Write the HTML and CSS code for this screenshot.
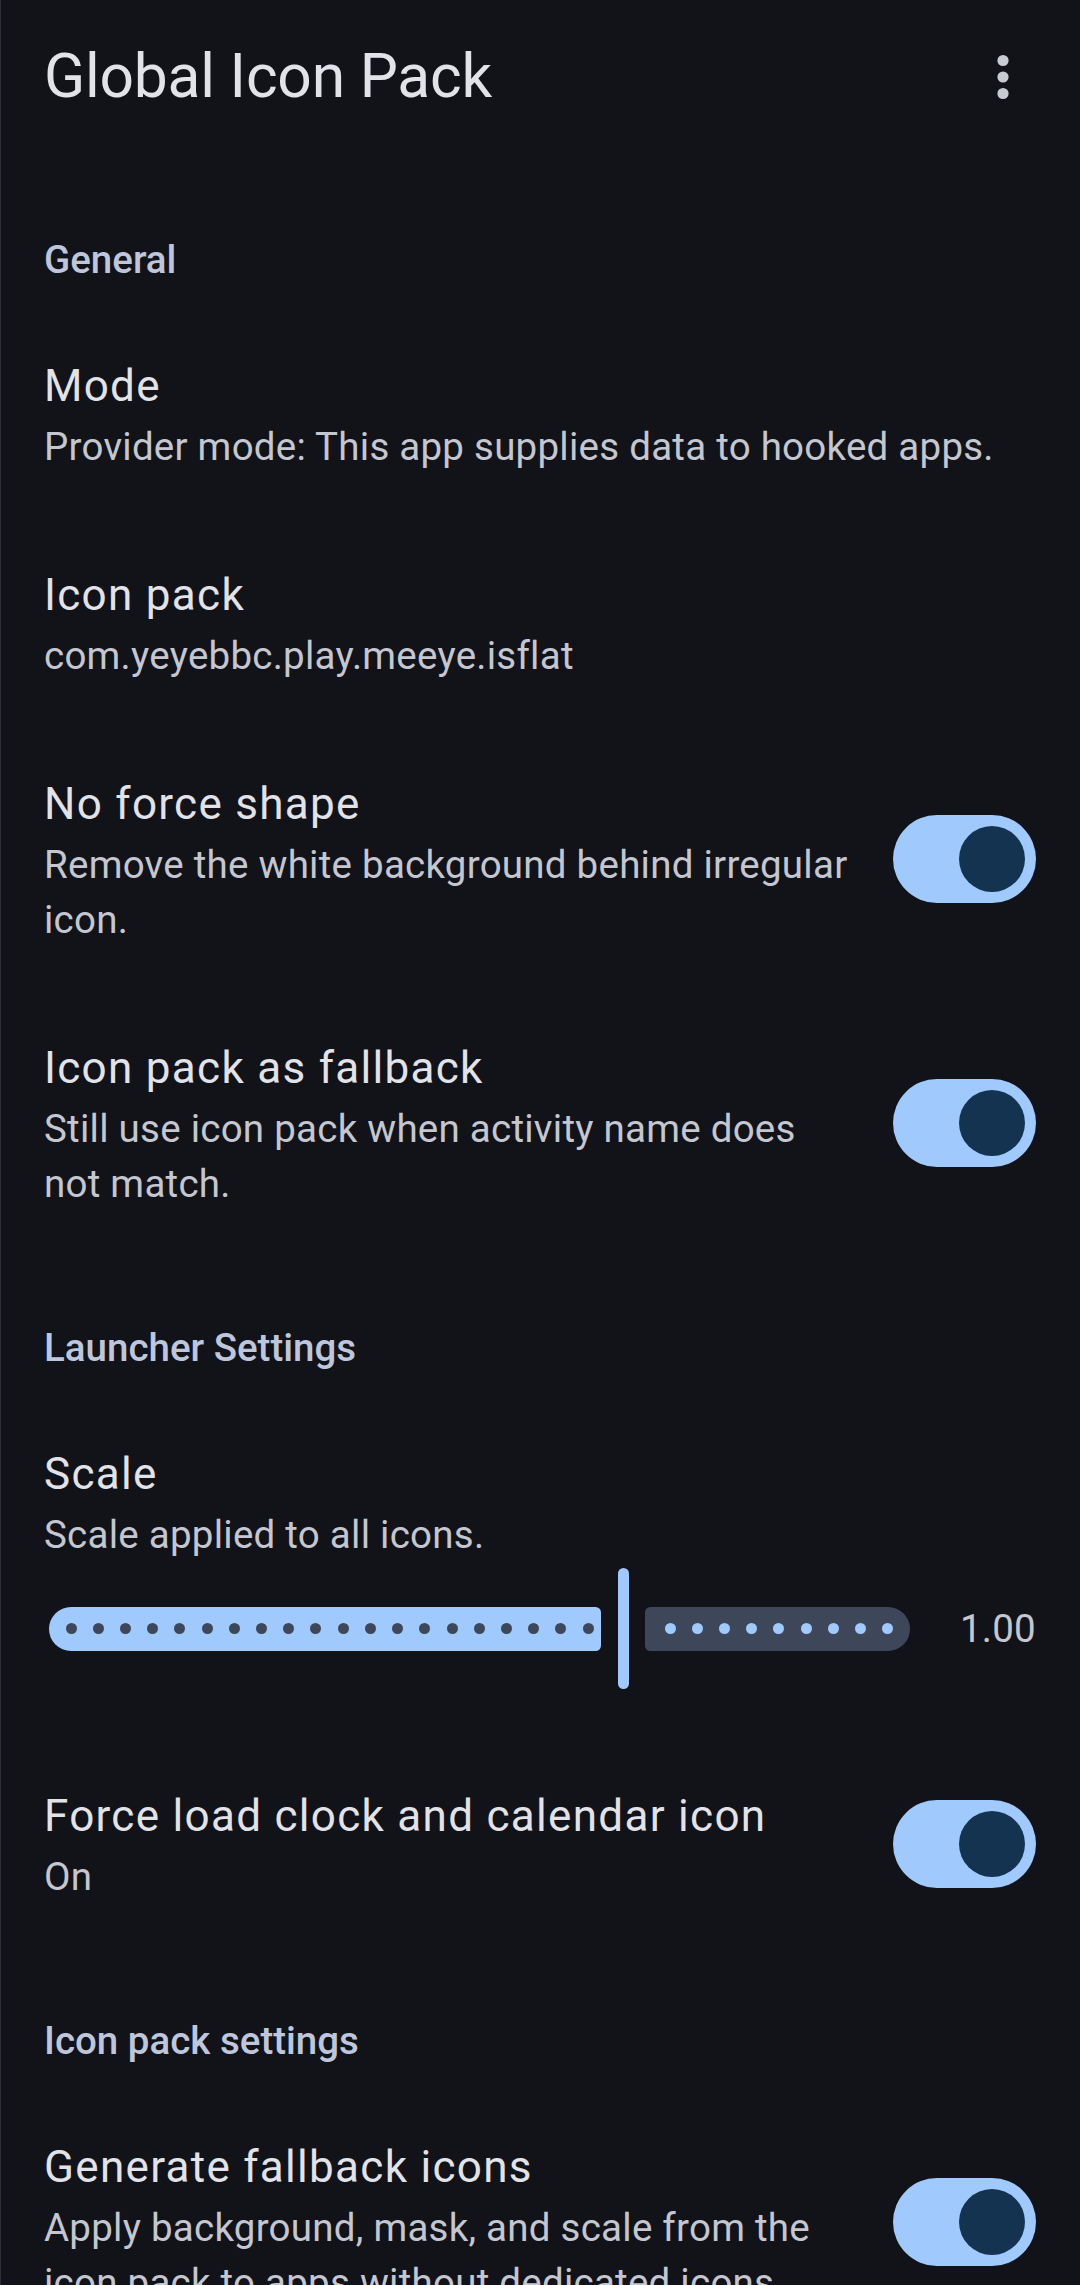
FILE: index.html
```html
<!DOCTYPE html>
<html lang="en">
<head>
<meta charset="utf-8">
<title>Global Icon Pack</title>
<link rel="stylesheet" href="styles.css">
</head>
<body>
<div class="screen">
  <header class="appbar">
    <h1 class="appbar-title">Global Icon Pack</h1>
    <button class="icon-btn" aria-label="More options">
      <svg width="24" height="50" viewBox="0 0 24 50" aria-hidden="true">
        <circle cx="12" cy="8.5" r="5.6" fill="#c9cbd3"/>
        <circle cx="12" cy="25" r="5.6" fill="#c9cbd3"/>
        <circle cx="12" cy="41.5" r="5.6" fill="#c9cbd3"/>
      </svg>
    </button>
  </header>

  <section class="group">
    <h2 class="cat first">General</h2>
    <div class="pref">
      <div class="pref-text">
        <div class="pref-title">Mode</div>
        <div class="pref-summary">Provider mode: This app supplies data to hooked apps.</div>
      </div>
    </div>
    <div class="pref">
      <div class="pref-text">
        <div class="pref-title">Icon pack</div>
        <div class="pref-summary">com.yeyebbc.play.meeye.isflat</div>
      </div>
    </div>
    <div class="pref">
      <div class="pref-text">
        <div class="pref-title">No force shape</div>
        <div class="pref-summary">Remove the white background behind irregular icon.</div>
      </div>
      <div class="switch on"><span class="thumb"></span></div>
    </div>
    <div class="pref">
      <div class="pref-text">
        <div class="pref-title">Icon pack as fallback</div>
        <div class="pref-summary">Still use icon pack when activity name does not match.</div>
      </div>
      <div class="switch on"><span class="thumb"></span></div>
    </div>
  </section>

  <section class="group">
    <h2 class="cat">Launcher Settings</h2>
    <div class="pref pref-slider">
      <div class="pref-text">
        <div class="pref-title">Scale</div>
        <div class="pref-summary">Scale applied to all icons.</div>
      </div>
      <div class="slider-row">
        <div class="slider">
          <div class="track active">
            <i></i><i></i><i></i><i></i><i></i><i></i><i></i><i></i><i></i><i></i>
            <i></i><i></i><i></i><i></i><i></i><i></i><i></i><i></i><i></i><i></i>
          </div>
          <div class="handle"></div>
          <div class="track inactive">
            <i></i><i></i><i></i><i></i><i></i><i></i><i></i><i></i><i></i>
          </div>
        </div>
        <div class="slider-value">1.00</div>
      </div>
    </div>
    <div class="pref">
      <div class="pref-text">
        <div class="pref-title">Force load clock and calendar icon</div>
        <div class="pref-summary">On</div>
      </div>
      <div class="switch on"><span class="thumb"></span></div>
    </div>
  </section>

  <section class="group">
    <h2 class="cat">Icon pack settings</h2>
    <div class="pref">
      <div class="pref-text">
        <div class="pref-title">Generate fallback icons</div>
        <div class="pref-summary">Apply background, mask, and scale from the icon pack to apps without dedicated icons.</div>
      </div>
      <div class="switch on"><span class="thumb"></span></div>
    </div>
  </section>
</div>
</body>
</html>
```
FILE: styles.css
```css
* { box-sizing: border-box; }

html, body {
  margin: 0;
  padding: 0;
  background: #111318;
}

body {
  font-family: Roboto, "Noto Sans", "Liberation Sans", sans-serif;
  color: #e2e2e9;
}

.screen {
  width: 1080px;
  height: 2285px;
  overflow: hidden;
  background: #111318;
  box-shadow: inset 1px 0 0 #2c2f35;
}

/* App bar */
.appbar {
  height: 154px;
  display: flex;
  align-items: center;
  padding-left: 44px;
  padding-right: 11px;
}

.appbar-title {
  flex: 1;
  margin: 0;
  font-size: 60.5px;
  font-weight: 400;
  letter-spacing: -0.2px;
  line-height: 76px;
  color: #e2e2e9;
}

.icon-btn {
  width: 132px;
  height: 132px;
  border: 0;
  padding: 0;
  background: transparent;
  display: flex;
  align-items: center;
  justify-content: center;
}

/* Category headers */
.cat {
  margin: 0;
  padding: 65px 44px 22px;
  font-size: 38.5px;
  line-height: 55px;
  font-weight: 500;
  letter-spacing: 0;
  color: #bec6dc;
}

.cat.first { padding-top: 78px; }

/* Preference rows */
.pref {
  display: flex;
  align-items: center;
  padding: 44px 44px;
}

.pref-text {
  flex: 1;
  min-width: 0;
}

.pref-title {
  font-size: 44px;
  line-height: 66px;
  letter-spacing: 1.3px;
  color: #e2e2e9;
}

.pref-summary {
  font-size: 38.5px;
  line-height: 55px;
  letter-spacing: 0.25px;
  color: #c4c6d0;
}

/* Switch */
.switch {
  flex: none;
  width: 143px;
  height: 88px;
  margin-left: 44px;
  border-radius: 44px;
  background: #a0cafd;
  display: flex;
  align-items: center;
  justify-content: flex-end;
  padding-right: 11px;
}

.switch .thumb {
  width: 66px;
  height: 66px;
  border-radius: 50%;
  background: #133350;
}

/* Slider preference */
.pref-slider {
  display: block;
  padding-bottom: 50px;
}

.slider-row {
  display: flex;
  align-items: center;
  height: 121px;
  margin-top: 6px;
  padding-left: 5px;
}

.slider {
  flex: none;
  display: flex;
  align-items: center;
  height: 121px;
}

.track {
  flex: none;
  height: 44px;
  display: flex;
  align-items: center;
  gap: 16.22px;
}

.track i {
  flex: none;
  width: 11px;
  height: 11px;
  border-radius: 50%;
}

.track.active {
  width: 552px;
  background: #a0cafd;
  border-radius: 22px 5.5px 5.5px 22px;
  padding-left: 16.5px;
}

.track.active i { background: #3e4759; }

.handle {
  flex: none;
  width: 11px;
  height: 121px;
  margin: 0 16px 0 17px;
  border-radius: 6px;
  background: #a0cafd;
}

.track.inactive {
  width: 265px;
  background: #3e4759;
  border-radius: 5.5px 22px 22px 5.5px;
  padding-left: 19.5px;
}

.track.inactive i { background: #a0cafd; }

.slider-value {
  flex: none;
  margin-left: auto;
  font-size: 38.5px;
  line-height: 55px;
  letter-spacing: 0.25px;
  color: #c4c6d0;
}
```
